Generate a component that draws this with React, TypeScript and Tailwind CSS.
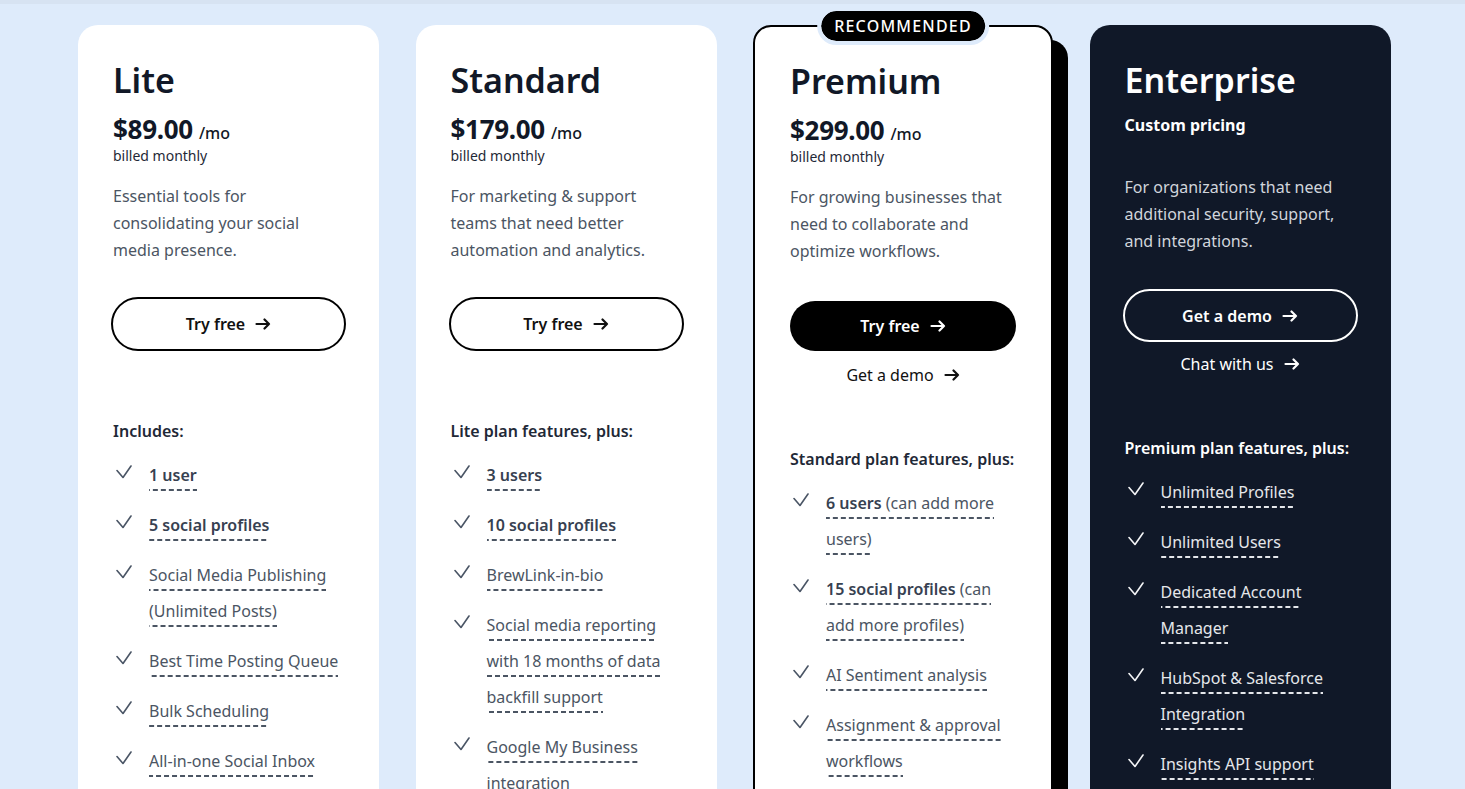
import React from "react";

type Feature = { bold?: string; text?: string };

type Plan = {
  name: string;
  price?: string;
  blurb: string;
  heading: string;
  features: Feature[];
};

const plans: Plan[] = [
  {
    name: "Lite",
    price: "$89.00",
    blurb: "Essential tools for consolidating your social media presence.",
    heading: "Includes:",
    features: [
      { bold: "1 user" },
      { bold: "5 social profiles" },
      { text: "Social Media Publishing (Unlimited Posts)" },
      { text: "Best Time Posting Queue" },
      { text: "Bulk Scheduling" },
      { text: "All-in-one Social Inbox" },
      { text: "Review Management" },
    ],
  },
  {
    name: "Standard",
    price: "$179.00",
    blurb: "For marketing & support teams that need better automation and analytics.",
    heading: "Lite plan features, plus:",
    features: [
      { bold: "3 users" },
      { bold: "10 social profiles" },
      { text: "BrewLink-in-bio" },
      { text: "Social media reporting with 18 months of data backfill support" },
      { text: "Google My Business integration" },
      { text: "Competitor analysis" },
    ],
  },
  {
    name: "Premium",
    price: "$299.00",
    blurb: "For growing businesses that need to collaborate and optimize workflows.",
    heading: "Standard plan features, plus:",
    features: [
      { bold: "6 users", text: " (can add more users)" },
      { bold: "15 social profiles", text: " (can add more profiles)" },
      { text: "AI Sentiment analysis" },
      { text: "Assignment & approval workflows" },
      { text: "Custom reporting" },
    ],
  },
  {
    name: "Enterprise",
    blurb: "For organizations that need additional security, support, and integrations.",
    heading: "Premium plan features, plus:",
    features: [
      { text: "Unlimited Profiles" },
      { text: "Unlimited Users" },
      { text: "Dedicated Account Manager" },
      { text: "HubSpot & Salesforce Integration" },
      { text: "Insights API support" },
      { text: "Single sign-on (SSO)" },
    ],
  },
];

function Check() {
  return (
    <svg width="16" height="14" viewBox="0 0 16 14" fill="none" stroke="currentColor" strokeWidth="1.6" strokeLinecap="round" strokeLinejoin="round">
      <path d="M1 5.5 7 12.5 15 1" />
    </svg>
  );
}

function Arrow() {
  return (
    <svg width="16" height="12" viewBox="0 0 16 12" fill="none" stroke="currentColor" strokeWidth="2.2" strokeLinecap="round" strokeLinejoin="round">
      <path d="M1.5 6h12.5M9.5 1.5 14 6l-4.5 4.5" />
    </svg>
  );
}

function FeatureList({ plan, dark }: { plan: Plan; dark?: boolean }) {
  const dash = dark
    ? "bg-[linear-gradient(90deg,#e5e7eb_5px,transparent_5px)]"
    : "bg-[linear-gradient(90deg,#4b5563_5px,transparent_5px)]";
  return (
    <ul className="mt-[14px] flex flex-col gap-[14px]">
      {plan.features.map((f, i) => (
        <li key={i} className="flex">
          <div className={`w-9 shrink-0 pl-[3px] pt-[8px] ${dark ? "text-gray-100" : "text-gray-600"}`}>
            <Check />
          </div>
          <p className={`text-[16px] leading-[36px] ${dark ? "text-gray-200" : "text-[#4b5563]"}`}>
            <span className={`pb-[5px] bg-[length:8px_2px] bg-bottom bg-repeat-x ${dash}`}>
              {f.bold && <span className={`font-semibold ${dark ? "text-white" : "text-[#374151]"}`}>{f.bold}</span>}
              {f.text}
            </span>
          </p>
        </li>
      ))}
    </ul>
  );
}

function PriceBlock({ plan }: { plan: Plan }) {
  return (
    <>
      <h2 className="text-[34px] leading-[44px] font-semibold text-[#111827]">{plan.name}</h2>
      <div className="mt-[11px] flex items-baseline gap-[6px] leading-[32px] text-[#111827]">
        <span className="text-[26px] font-bold tracking-[-0.3px]">{plan.price}</span>
        <span className="text-[16px] font-medium">/mo</span>
      </div>
      <p className="-mt-[3px] text-[14px] leading-[20px] text-[#1f2937]">billed monthly</p>
      <p className="mt-[17px] text-[16px] leading-[27px] text-[#4b5563]">{plan.blurb}</p>
    </>
  );
}

function LightCard({ plan }: { plan: Plan }) {
  return (
    <div className="w-[301px] shrink-0 h-[900px] rounded-[20px] bg-white px-[35px] pt-[33px]">
      <PriceBlock plan={plan} />
      <button className="mt-[33px] -mx-[2px] w-[235px] h-[54px] rounded-full border-2 border-black flex items-center justify-center gap-[10px] text-[16px] font-semibold text-[#111]">
        Try free <Arrow />
      </button>
      <h3 className="mt-[68px] text-[16px] leading-[24px] font-semibold text-[#1f2937]">{plan.heading}</h3>
      <FeatureList plan={plan} />
    </div>
  );
}

function PremiumCard({ plan }: { plan: Plan }) {
  return (
    <div className="relative w-[300px] shrink-0 h-[900px] rounded-[18px] border-2 border-black bg-white px-[35px] pt-[32px] shadow-[15px_15px_0_0_#000]">
      <div className="absolute left-1/2 top-0 -translate-x-1/2 -translate-y-1/2 -mt-px rounded-full bg-black px-[13px] h-[30px] flex items-center text-white text-[16px] font-medium tracking-[1.2px] outline-4 outline-[#deebfb]">
        RECOMMENDED
      </div>
      <PriceBlock plan={plan} />
      <button className="mt-[36px] w-full h-[50px] rounded-full bg-black flex items-center justify-center gap-[10px] text-[16px] font-semibold text-white">
        Try free <Arrow />
      </button>
      <div className="mt-[12px] flex items-center justify-center gap-[10px] text-[16px] leading-[24px] text-[#111]">
        Get a demo <Arrow />
      </div>
      <h3 className="mt-[60px] text-[16px] leading-[24px] font-semibold text-[#1f2937]">{plan.heading}</h3>
      <FeatureList plan={plan} />
    </div>
  );
}

function EnterpriseCard({ plan }: { plan: Plan }) {
  return (
    <div className="w-[301px] shrink-0 h-[900px] rounded-[20px] bg-[#101828] px-[35px] pt-[33px]">
      <h2 className="text-[34px] leading-[44px] font-semibold text-white">{plan.name}</h2>
      <p className="mt-[11px] text-[16px] leading-[24px] font-bold text-white">Custom pricing</p>
      <p className="mt-[37px] text-[16px] leading-[27px] text-gray-300">{plan.blurb}</p>
      <button className="mt-[34px] -mx-[2px] w-[235px] h-[53px] rounded-full border-2 border-white flex items-center justify-center gap-[10px] text-[16px] font-semibold text-white">
        Get a demo <Arrow />
      </button>
      <div className="mt-[10px] flex items-center justify-center gap-[10px] text-[16px] leading-[24px] text-white">
        Chat with us <Arrow />
      </div>
      <h3 className="mt-[60px] text-[16px] leading-[24px] font-semibold text-white">{plan.heading}</h3>
      <FeatureList plan={plan} dark />
    </div>
  );
}

export default function App() {
  return (
    <div className="h-[789px] overflow-hidden bg-[#deebfb] font-['Noto_Sans',sans-serif]">
      <div className="h-[4px] bg-[#d7e3f2]" />
      <div className="flex gap-[36.5px] pl-[78px] pt-[21px]">
        <LightCard plan={plans[0]} />
        <LightCard plan={plans[1]} />
        <PremiumCard plan={plans[2]} />
        <EnterpriseCard plan={plans[3]} />
      </div>
    </div>
  );
}
